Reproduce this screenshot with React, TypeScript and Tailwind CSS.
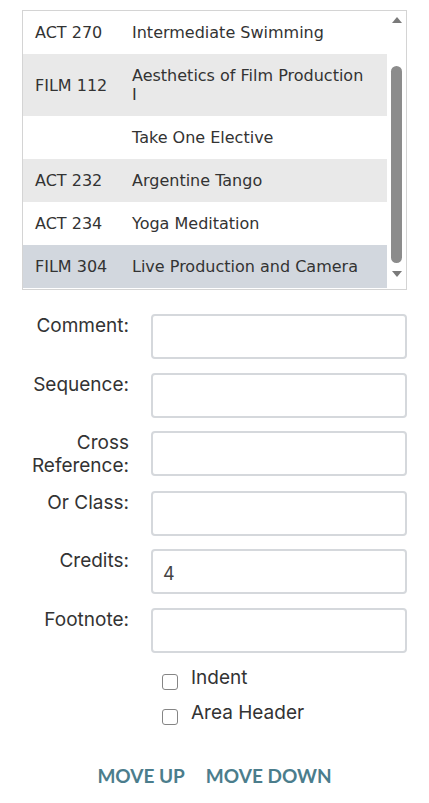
import { useState } from "react";

const courses = [
  { code: "ACT 270", title: "Intermediate Swimming" },
  { code: "FILM 112", title: "Aesthetics of Film Production I" },
  { code: "", title: "Take One Elective" },
  { code: "ACT 232", title: "Argentine Tango" },
  { code: "ACT 234", title: "Yoga Meditation" },
  { code: "FILM 304", title: "Live Production and Camera" },
];

const fields = [
  { label: "Comment:", value: "" },
  { label: "Sequence:", value: "" },
  { label: "Cross Reference:", value: "" },
  { label: "Or Class:", value: "" },
  { label: "Credits:", value: "4" },
  { label: "Footnote:", value: "" },
];

export default function App() {
  const [selected, setSelected] = useState(5);
  const [values, setValues] = useState(fields.map((f) => f.value));
  const [indent, setIndent] = useState(false);
  const [areaHeader, setAreaHeader] = useState(false);

  const handleChange = (index: number, value: string) => {
    const updated = [...values];
    updated[index] = value;
    setValues(updated);
  };

  return (
    <div className="min-h-[803px] w-[429px] bg-white pt-[10px]">
      {/* Course list */}
      <div className="mx-[22px] flex h-[280px] border border-[#d4d4d4] bg-white font-['DejaVu_Sans',sans-serif] text-[16px] text-[#333]">
        <div className="flex-1 overflow-hidden">
          {courses.map((c, i) => {
            const bg = i === selected ? "bg-[#d2d7de]" : i % 2 === 1 ? "bg-[#e9e9e9]" : "bg-white";
            return (
              <div key={i} onClick={() => setSelected(i)} className={`flex py-[12px] pl-[12px] pr-[14px] leading-[19px] ${bg}`}>
                <span className={`w-[97px] shrink-0 ${i === 1 ? "self-center" : ""}`}>{c.code}</span>
                <span className="flex-1">{c.title}</span>
              </div>
            );
          })}
        </div>
        {/* scrollbar */}
        <div className="flex w-[19px] flex-col items-center bg-white">
          <div className="mt-[6px] h-0 w-0 border-x-[5px] border-b-[6px] border-x-transparent border-b-[#7a7a7a]" />
          <div className="mt-[43px] h-[197px] w-[11px] rounded-full bg-[#8c8c8c]" />
          <div className="mt-[8px] h-0 w-0 border-x-[5px] border-t-[6px] border-x-transparent border-t-[#7a7a7a]" />
        </div>
      </div>

      {/* Form */}
      <div className="mt-[24px] flex flex-col gap-[13.6px] font-['Inter',sans-serif] text-[19px] text-[#333]">
        {fields.map((f, i) => (
          <div key={f.label} className="flex items-start">
            <label className="w-[129px] text-right leading-[23px]">
              {f.label === "Cross Reference:" ? (
                <>
                  Cross
                  <br />
                  Reference:
                </>
              ) : (
                f.label
              )}
            </label>
            <input
              type="text"
              value={values[i]}
              onChange={(e) => handleChange(i, e.target.value)}
              className="ml-[22px] h-[45px] w-[256px] rounded-[4px] border-2 border-[#d5d8dc] px-[10px] pt-[3px] text-[18px] text-[#444] outline-none"
            />
          </div>
        ))}
      </div>

      <div className="mt-[13px] ml-[162px] flex flex-col gap-[11px] font-['Inter',sans-serif] text-[19px] text-[#333]">
        <label className="flex items-center gap-[13px] leading-[24px]">
          <input type="checkbox" checked={indent} onChange={(e) => setIndent(e.target.checked)} className="mt-[8px] h-[16px] w-[16px] appearance-none rounded-[3px] border-[1.5px] border-[#858585] checked:bg-[#4a7d8c]" />
          Indent
        </label>
        <label className="flex items-center gap-[13px] leading-[24px]">
          <input type="checkbox" checked={areaHeader} onChange={(e) => setAreaHeader(e.target.checked)} className="mt-[8px] h-[16px] w-[16px] appearance-none rounded-[3px] border-[1.5px] border-[#858585] checked:bg-[#4a7d8c]" />
          Area Header
        </label>
      </div>

      <div className="mt-[37px] flex justify-center gap-[21px] font-['Lato',sans-serif] text-[19px] font-bold text-[#4b7d8c]">
        <button type="button">MOVE UP</button>
        <button type="button">MOVE DOWN</button>
      </div>
    </div>
  );
}
